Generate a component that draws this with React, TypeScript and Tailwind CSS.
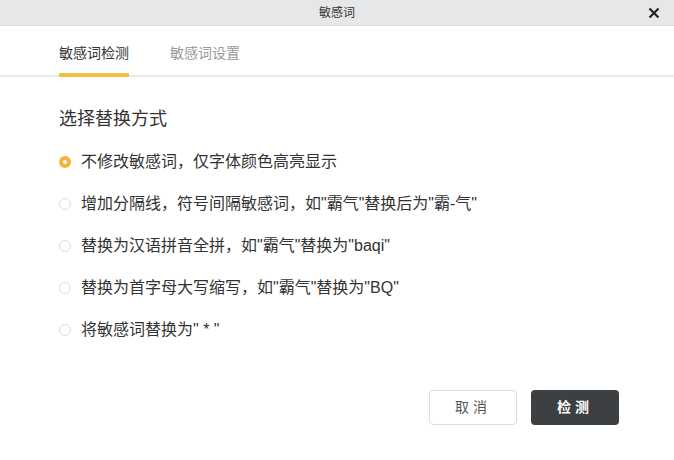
import React from "react";

const options = [
  "不修改敏感词，仅字体颜色高亮显示",
  "增加分隔线，符号间隔敏感词，如\"霸气\"替换后为\"霸-气\"",
  "替换为汉语拼音全拼，如\"霸气\"替换为\"baqi\"",
  "替换为首字母大写缩写，如\"霸气\"替换为\"BQ\"",
  "将敏感词替换为\" * \"",
];

export default function App() {
  return (
    <div
      className="w-[674px] h-[460px] bg-white overflow-hidden"
      style={{ fontFamily: '"Liberation Sans", "Noto Sans CJK SC", sans-serif' }}
    >
      <div className="relative h-[26px] bg-[#e6e7e8] border-b border-[#dcdcdc] flex items-center justify-center">
        <span className="text-[12px] text-[#333]">敏感词</span>
        <svg
          className="absolute right-[14px] top-[7px]"
          width="12"
          height="12"
          viewBox="0 0 12 12"
        >
          <path d="M1.5 1.5 L10.5 10.5 M10.5 1.5 L1.5 10.5" stroke="#222" strokeWidth="2.2" />
        </svg>
      </div>
      <div className="h-[51px] border-b-2 border-[#ebebeb] flex items-end pl-[59px] gap-[41px]">
        <div className="pb-[10px] border-b-[4px] border-[#f5c042] -mb-[2px] text-[14px] leading-[20px] text-[#333]">
          敏感词检测
        </div>
        <div className="pb-[10px] border-b-[4px] border-transparent -mb-[2px] text-[14px] leading-[20px] text-[#999]">
          敏感词设置
        </div>
      </div>
      <div className="pl-[59px]">
        <div className="mt-[30px] text-[18px] leading-[24px] text-[#333]">选择替换方式</div>
        <div className="mt-[10px] flex flex-col">
          {options.map((t, i) => (
            <div key={i} className="h-[42px] flex items-center gap-[10px]">
              {i === 0 ? (
                <span className="w-[12px] h-[12px] rounded-full bg-[#f5b33b] flex items-center justify-center">
                  <span className="w-[4px] h-[4px] rounded-full bg-white" />
                </span>
              ) : (
                <span className="w-[12px] h-[12px] rounded-full border border-[#dcdcdc] bg-white" />
              )}
              <span className="text-[16px] text-[#333]">{t}</span>
            </div>
          ))}
        </div>
      </div>
      <div className="mt-[39px] flex justify-end gap-[14px] pr-[55px]">
        <button className="w-[88px] h-[35px] rounded-[4px] border border-[#dcdcdc] bg-white text-[14px] text-[#555] tracking-[4px]">
          取消
        </button>
        <button className="w-[88px] h-[35px] rounded-[4px] bg-[#3c4043] text-[14px] font-semibold text-white tracking-[4px]">
          检测
        </button>
      </div>
    </div>
  );
}
